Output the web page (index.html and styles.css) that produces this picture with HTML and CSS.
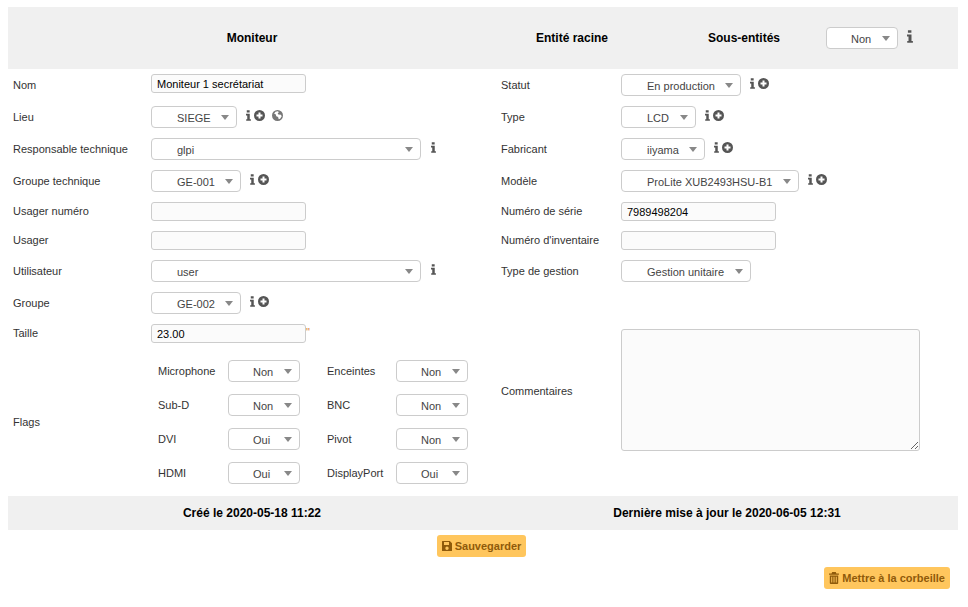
FILE: index.html
```html
<!DOCTYPE html>
<html>
	<head>
		<title>Moniteur</title>
		<link rel="stylesheet" href="styles.css">
	</head>
	<body>
		<svg class="defs" width="0" height="0">
			<symbol id="info" viewBox="0.4 0.6 5.2 11"><path d="M1.2 0.6h3v2.3h-3zM0.4 4.4h3.9v5.6h1.2v1.6H0.6V10h1.1V6h-1.3z"/></symbol>
			<symbol id="plus" viewBox="0.5 0.5 11 11"><path fill-rule="evenodd" d="M6 .5a5.5 5.5 0 1 0 0 11 5.5 5.5 0 0 0 0-11zM5 3h2v2h2v2H7v2H5V7H3V5h2z"/></symbol>
			<symbol id="globe" viewBox="0.5 0.5 11 11"><path fill-rule="evenodd" d="M6 .5a5.5 5.5 0 1 0 0 11 5.5 5.5 0 0 0 0-11zM4 2.2l2.4-.4 1 1-1.2 1 .6 1.2 2.6.2.8 1.6-1.6 2.4-1.4.6-.6-2.2-1.8-.8-.6-2-1.6-.6z"/></symbol>
			<symbol id="save" viewBox="1 1 10 10"><path fill-rule="evenodd" d="M1.5 1h7.3L11 3.2v7.3a.5.5 0 0 1-.5.5h-9a.5.5 0 0 1-.5-.5v-9a.5.5 0 0 1 .5-.5zM3 2v3h5V2zM6 6.6a1.7 1.7 0 1 0 0 3.4 1.7 1.7 0 0 0 0-3.4z"/></symbol>
			<symbol id="trash" viewBox="0.4 0 10.2 12"><path fill-rule="evenodd" d="M3.7 0h3.6l.6 1.4h2.6v1.2H0.4V1.4H3zM1.2 3.4h8.6v7.6a1 1 0 0 1-1 1H2.2a1 1 0 0 1-1-1zM2.7 4.6v6h1v-6zM5 4.6v6h1v-6zM7.3 4.6v6h1v-6z"/></symbol>
		</svg>

		<div class="band head-band">
			<div class="head-title">Moniteur</div>
			<div class="head-entity">Entité racine</div>
			<div class="head-sub">Sous-entités</div>
			<span class="combo w72"><span class="val">Non</span></span>
			<svg class="ic i-info head-info"><use href="#info"/></svg>
		</div>

		<div class="fields">
			<label>Nom</label>
			<div class="ctl"><input class="txt" type="text" value="Moniteur 1 secrétariat"></div>
			<label>Statut</label>
			<div class="ctl">
				<span class="combo w120"><span class="val">En production</span></span>
				<svg class="ic i-info"><use href="#info"/></svg><svg class="ic i-plus"><use href="#plus"/></svg>
			</div>

			<label>Lieu</label>
			<div class="ctl">
				<span class="combo w86"><span class="val">SIEGE</span></span>
				<svg class="ic i-info"><use href="#info"/></svg><svg class="ic i-plus"><use href="#plus"/></svg><svg class="ic i-globe"><use href="#globe"/></svg>
			</div>
			<label>Type</label>
			<div class="ctl">
				<span class="combo w75"><span class="val">LCD</span></span>
				<svg class="ic i-info"><use href="#info"/></svg><svg class="ic i-plus"><use href="#plus"/></svg>
			</div>

			<label>Responsable technique</label>
			<div class="ctl">
				<span class="combo w270"><span class="val">glpi</span></span>
				<svg class="ic i-info"><use href="#info"/></svg>
			</div>
			<label>Fabricant</label>
			<div class="ctl">
				<span class="combo w84"><span class="val">iiyama</span></span>
				<svg class="ic i-info"><use href="#info"/></svg><svg class="ic i-plus"><use href="#plus"/></svg>
			</div>

			<label>Groupe technique</label>
			<div class="ctl">
				<span class="combo w90"><span class="val">GE-001</span></span>
				<svg class="ic i-info"><use href="#info"/></svg><svg class="ic i-plus"><use href="#plus"/></svg>
			</div>
			<label>Modèle</label>
			<div class="ctl">
				<span class="combo w178"><span class="val">ProLite XUB2493HSU-B1</span></span>
				<svg class="ic i-info"><use href="#info"/></svg><svg class="ic i-plus"><use href="#plus"/></svg>
			</div>

			<label class="up">Usager numéro</label>
			<div class="ctl"><input class="txt" type="text"></div>
			<label class="up">Numéro de série</label>
			<div class="ctl"><input class="txt" type="text" value="7989498204"></div>

			<label class="up">Usager</label>
			<div class="ctl"><input class="txt" type="text"></div>
			<label class="up">Numéro d'inventaire</label>
			<div class="ctl"><input class="txt" type="text"></div>

			<label>Utilisateur</label>
			<div class="ctl">
				<span class="combo w270"><span class="val">user</span></span>
				<svg class="ic i-info"><use href="#info"/></svg>
			</div>
			<label>Type de gestion</label>
			<div class="ctl"><span class="combo w130"><span class="val">Gestion unitaire</span></span></div>

			<label>Groupe</label>
			<div class="ctl">
				<span class="combo w90"><span class="val">GE-002</span></span>
				<svg class="ic i-info"><use href="#info"/></svg><svg class="ic i-plus"><use href="#plus"/></svg>
			</div>
			<div class="empty"></div>
			<div class="empty"></div>

			<label class="up">Taille</label>
			<div class="ctl"><input class="txt" type="text" value="23.00"><span class="unit">"</span></div>
			<label class="comment-label">Commentaires</label>
			<div class="comment-cell"><textarea class="comment"></textarea></div>

			<label>Flags</label>
			<div class="flags">
				<span>Microphone</span><span class="combo w72"><span class="val">Non</span></span>
				<span>Enceintes</span><span class="combo w72"><span class="val">Non</span></span>
				<span>Sub-D</span><span class="combo w72"><span class="val">Non</span></span>
				<span>BNC</span><span class="combo w72"><span class="val">Non</span></span>
				<span>DVI</span><span class="combo w72"><span class="val">Oui</span></span>
				<span>Pivot</span><span class="combo w72"><span class="val">Non</span></span>
				<span>HDMI</span><span class="combo w72"><span class="val">Oui</span></span>
				<span>DisplayPort</span><span class="combo w72"><span class="val">Oui</span></span>
			</div>
		</div>

		<div class="band foot-band">
			<div>Créé le 2020-05-18 11:22</div>
			<div>Dernière mise à jour le 2020-06-05 12:31</div>
		</div>

		<div class="save-row">
			<button class="btn" type="button"><svg class="btn-ic btn-save"><use href="#save"/></svg>Sauvegarder</button>
		</div>
		<div class="trash-row">
			<button class="btn" type="button"><svg class="btn-ic"><use href="#trash"/></svg>Mettre à la corbeille</button>
		</div>
	</body>
</html>
```

FILE: styles.css
```css
body {
	margin: 7px 10px 0 8px;
	color: #333;
	font-family: "Liberation Sans", Arial, sans-serif;
	font-size: 11px;
}

.defs {
	position: absolute;
}

.band {
	background: #f0f0f0;
	color: #000;
	font-size: 12px;
	font-weight: bold;
}

.head-band {
	display: flex;
	align-items: center;
	height: 62px;
}

.head-title {
	width: 488px;
	text-align: center;
}

.head-entity {
	width: 152px;
	text-align: center;
}

.head-sub {
	box-sizing: border-box;
	width: 178px;
	padding-left: 14px;
	text-align: center;
}

.head-band .combo {
	font-size: 11px;
	font-weight: normal;
}

.head-band .head-info {
	width: 6px;
	height: 13px;
	margin: 0 0 3px 9px;
}

.fields {
	display: grid;
	grid-template-columns: 138px 350px 120px 342px;
	grid-auto-rows: auto;
}

.fields label {
	align-self: center;
	padding-left: 5px;
}

.fields label.up {
	padding-bottom: 2px;
}

.ctl {
	display: flex;
	align-items: flex-start;
	padding: 5px;
}

.empty {
	padding: 5px;
}

.txt {
	box-sizing: border-box;
	width: 155px;
	height: 19px;
	margin: 0;
	padding: 1px 5px;
	border: 1px solid #ccc;
	border-radius: 3px;
	background: #fbfbfb;
	color: #000;
	font-family: inherit;
	font-size: 11px;
}

.combo {
	box-sizing: border-box;
	display: inline-block;
	flex: none;
	position: relative;
	height: 22px;
	border: 1px solid #ccc;
	border-radius: 4px;
	background: #fff;
	color: #444;
	line-height: 23px;
}

.combo::after {
	content: "";
	position: absolute;
	top: 8px;
	right: 7px;
	border-top: 5px solid #888;
	border-left: 4px solid transparent;
	border-right: 4px solid transparent;
}

.val {
	padding-left: 25px;
}

.w72 .val { padding-left: 24px; }

.w72 { width: 72px; }
.w75 { width: 75px; }
.w84 { width: 84px; }
.w86 { width: 86px; }
.w90 { width: 90px; }
.w120 { width: 120px; }
.w130 { width: 130px; }
.w178 { width: 178px; }
.w270 { width: 270px; }

.ic {
	flex: none;
	fill: #555;
}

.i-info {
	width: 5px;
	height: 11px;
	margin: 4px 0 0 9px;
}

.w270 + .i-info {
	margin-left: 10px;
}

.i-plus {
	width: 11px;
	height: 11px;
	margin: 4px 0 0 3px;
}

.i-globe {
	width: 11px;
	height: 11px;
	margin: 4px 0 0 7px;
	fill: #777;
}

.unit {
	padding-top: 2px;
	color: #d9843b;
	line-height: 12px;
}

.comment-label {
	grid-row: span 2;
	align-self: start !important;
	margin-top: 66px;
}

.comment-cell {
	grid-row: span 2;
	padding: 10px 5px 0;
}

.comment {
	box-sizing: border-box;
	display: block;
	width: 299px;
	height: 122px;
	margin: 0;
	border: 1px solid #ccc;
	border-radius: 3px;
	background: #fbfbfb;
}

.flags {
	display: grid;
	grid-template-columns: 70px 72px 27px 69px 72px;
	grid-auto-rows: 22px;
	row-gap: 12px;
	align-items: center;
	padding: 12px 0 12px 12px;
}

.flags span:nth-child(4n+3) {
	grid-column: 4;
}

.foot-band {
	display: flex;
	align-items: center;
	height: 34px;
}

.foot-band div:first-child {
	width: 488px;
	text-align: center;
}

.foot-band div:last-child {
	width: 462px;
	text-align: center;
}

.save-row {
	display: flex;
	justify-content: center;
	padding-top: 5px;
	padding-right: 3px;
}

.trash-row {
	display: flex;
	justify-content: flex-end;
	padding: 10px 8px 0 0;
}

.btn {
	display: inline-flex;
	align-items: center;
	height: 22px;
	padding: 0 5px;
	border: 0;
	border-radius: 3px;
	background: #ffc65d;
	color: #8f5a0a;
	font-family: inherit;
	font-size: 11px;
	font-weight: bold;
}

.btn-ic {
	width: 10px;
	height: 12px;
	margin-right: 3px;
	fill: #8f5a0a;
}

.btn-save {
	height: 10px;
}
```
